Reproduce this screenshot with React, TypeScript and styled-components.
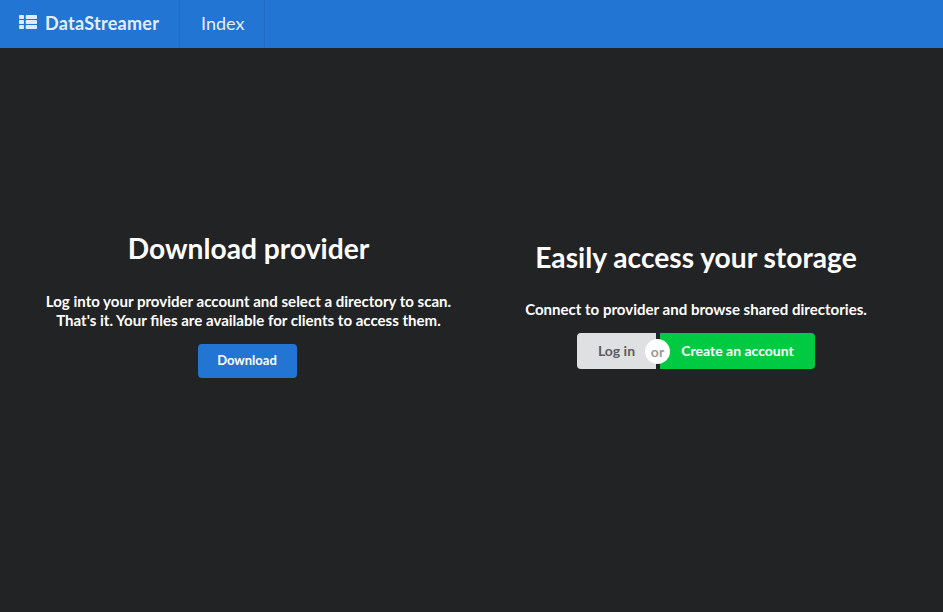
import React from "react";
import styled, { createGlobalStyle } from "styled-components";

const Global = createGlobalStyle`
  *, *::before, *::after { box-sizing: border-box; }
  body { margin: 0; background: #222325; font-family: Lato, sans-serif; color: #fff; font-size: 14px; }
  h1, p { margin: 0; }
`;

const Page = styled.div`
  display: flex;
  flex-direction: column;
  height: 612px;
  overflow: hidden;
`;

const Bar = styled.nav`
  display: flex;
  flex: 0 0 48px;
  background: #2375d3;
  font-size: 18px;
`;

const Item = styled.a<{ $brand?: boolean }>`
  display: flex;
  align-items: center;
  width: ${(p) => (p.$brand ? 180 : 85)}px;
  padding-left: ${(p) => (p.$brand ? 19 : 21)}px;
  padding-bottom: 2px;
  border-right: 1px solid #216ac0;
  color: rgba(255, 255, 255, 0.9);
  font-weight: ${(p) => (p.$brand ? 700 : 400)};
  letter-spacing: ${(p) => (p.$brand ? 0.27 : 0)}px;
  line-height: 22px;
  white-space: nowrap;
`;

const ListIcon = styled.svg`
  display: block;
  width: 18px;
  height: 14px;
  margin: 0 8px 2px 0;
  opacity: 0.95;
`;

const Main = styled.main`
  display: grid;
  grid-template-columns: 497px 398px;
  flex: 1;
`;

const Column = styled.section<{ $top: number }>`
  display: flex;
  flex-direction: column;
  align-items: center;
  padding-top: ${(p) => p.$top}px;
  text-align: center;
`;

const Title = styled.h1`
  font-size: 28.2px;
  line-height: 36px;
  font-weight: 700;
  white-space: nowrap;
`;

const Text = styled.p<{ $gap: number }>`
  margin: ${(p) => p.$gap}px 0 14px;
  font-size: 15.05px;
  line-height: 19px;
  font-weight: 700;
  white-space: nowrap;
`;

const kinds = {
  download: { width: 99, height: 34, size: 13, radius: "4px", bg: "#2375d3", fg: "#fff" },
  login: { width: 79, height: 36, size: 14, radius: "4px 0 0 4px", bg: "#dfe0e2", fg: "#5c5d5e" },
  create: { width: 155, height: 36, size: 14, radius: "0 4px 4px 0", bg: "#00ca41", fg: "#fff" },
};

const Button = styled.button<{ $kind: keyof typeof kinds }>`
  width: ${(p) => kinds[p.$kind].width}px;
  height: ${(p) => kinds[p.$kind].height}px;
  padding: 0 0 1px;
  border: 0;
  border-radius: ${(p) => kinds[p.$kind].radius};
  background: ${(p) => kinds[p.$kind].bg};
  color: ${(p) => kinds[p.$kind].fg};
  font: 700 ${(p) => kinds[p.$kind].size}px/14px Lato, sans-serif;
  white-space: nowrap;
  cursor: pointer;
`;

const DownloadButton = styled(Button)`
  margin-right: 2px;
  padding: 0 1px 2px 0;
`;

const Buttons = styled.div`
  position: relative;
  display: flex;
  gap: 4px;
`;

const Or = styled.span`
  position: absolute;
  left: 68px;
  top: 6px;
  width: 25px;
  height: 25px;
  border-radius: 50%;
  background: #fff;
  color: #999;
  font-weight: 700;
  font-size: 14px;
  line-height: 25px;
  text-align: center;
`;

export default function App() {
  return (
    <>
      <Global />
      <Page>
        <Bar>
          <Item $brand>
            <ListIcon viewBox="0 0 18 14" fill="currentColor">
              {[0, 5, 10].map((y) => (
                <React.Fragment key={y}>
                  <rect x="0" y={y} width="5" height="4" rx="0.8" />
                  <rect x="6.7" y={y} width="11.3" height="4" rx="0.8" />
                </React.Fragment>
              ))}
            </ListIcon>
            DataStreamer
          </Item>
          <Item>Index</Item>
        </Bar>
        <Main>
          <Column $top={182}>
            <Title>Download provider</Title>
            <Text $gap={26}>
              Log into your provider account and select a directory to scan.
              <br />
              That's it. Your files are available for clients to access them.
            </Text>
            <DownloadButton $kind="download">Download</DownloadButton>
          </Column>
          <Column $top={191}>
            <Title>Easily access your storage</Title>
            <Text $gap={25}>Connect to provider and browse shared directories.</Text>
            <Buttons>
              <Button $kind="login">Log in</Button>
              <Button $kind="create">Create an account</Button>
              <Or>or</Or>
            </Buttons>
          </Column>
        </Main>
      </Page>
    </>
  );
}
